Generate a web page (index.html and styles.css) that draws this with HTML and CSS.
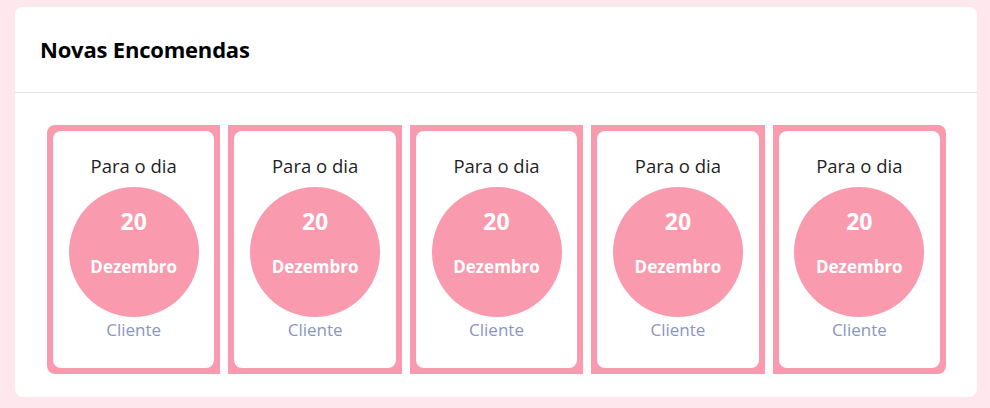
FILE: index.html
```html
<!DOCTYPE html>
<html lang="pt">
<head>
<meta charset="utf-8">
<link rel="stylesheet" href="styles.css">
</head>
<body>
<div class="panel">
  <div class="panel-header"><h2 class="title">Novas Encomendas</h2></div>
  <div class="panel-body">
    <div class="strip">
      <div class="item"><div class="card"><div class="label">Para o dia</div><div class="circle"><div class="day">20</div><div class="month">Dezembro</div></div><div class="client">Cliente</div></div></div>
      <div class="item"><div class="card"><div class="label">Para o dia</div><div class="circle"><div class="day">20</div><div class="month">Dezembro</div></div><div class="client">Cliente</div></div></div>
      <div class="item"><div class="card"><div class="label">Para o dia</div><div class="circle"><div class="day">20</div><div class="month">Dezembro</div></div><div class="client">Cliente</div></div></div>
      <div class="item"><div class="card"><div class="label">Para o dia</div><div class="circle"><div class="day">20</div><div class="month">Dezembro</div></div><div class="client">Cliente</div></div></div>
      <div class="item"><div class="card"><div class="label">Para o dia</div><div class="circle"><div class="day">20</div><div class="month">Dezembro</div></div><div class="client">Cliente</div></div></div>
    </div>
  </div>
</div>
</body>
</html>
```
FILE: styles.css
```css
html, body {
  margin: 0;
  padding: 0;
}
body {
  background: #fee8ee;
  font-family: "Open Sans", "Noto Sans", sans-serif;
  padding: 7px 13px 11px 15px;
  height: 408px;
  box-sizing: border-box;
}
.panel {
  background: #fff;
  border-radius: 8px;
  height: 390px;
  box-sizing: border-box;
}
.panel-header {
  height: 86px;
  box-sizing: border-box;
  border-bottom: 1px solid #e0e0e0;
  padding: 0 25px 2px;
  display: flex;
  align-items: center;
}
.title {
  margin: 0;
  font-size: 22px;
  font-weight: 700;
  color: #000;
  letter-spacing: -0.2px;
}
.panel-body {
  padding: 32px 31px 0 32px;
}
.strip {
  display: flex;
  gap: 8px;
  border-radius: 8px;
  overflow: hidden;
}
.item {
  flex: 1 1 0;
  background: #f99aae;
  padding: 6px 6px 6px 6px;
  height: 249px;
  box-sizing: border-box;
}
.card {
  background: #fff;
  border-radius: 8px;
  height: 100%;
  display: flex;
  flex-direction: column;
  align-items: center;
  padding-top: 23px;
  box-sizing: border-box;
}
.label {
  font-size: 18.5px;
  line-height: 24px;
  color: #1f1f1f;
}
.circle {
  margin-top: 9px;
  width: 130px;
  height: 130px;
  border-radius: 50%;
  background: #f99aae;
  color: #fff;
  display: flex;
  flex-direction: column;
  align-items: center;
  padding-top: 20px;
  box-sizing: border-box;
}
.day {
  font-size: 23px;
  font-weight: 700;
  line-height: 28px;
}
.month {
  margin-top: 20px;
  font-size: 17px;
  font-weight: 700;
  line-height: 24px;
}
.client {
  margin-top: 1px;
  font-size: 17px;
  line-height: 24px;
  color: #8a96bd;
}
```
